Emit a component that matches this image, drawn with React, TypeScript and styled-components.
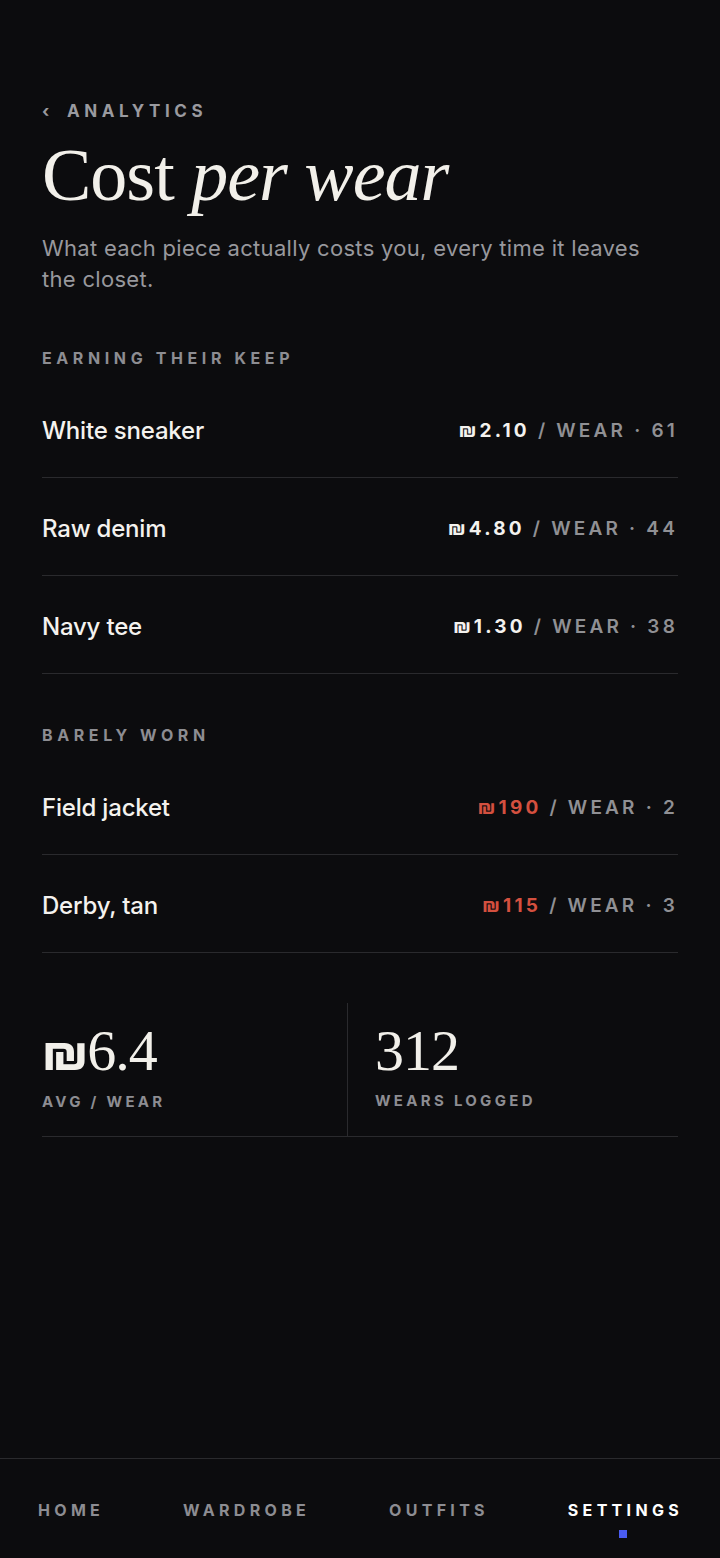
import React from "react";
import styled, { createGlobalStyle } from "styled-components";

const Global = createGlobalStyle`
  html, body { margin: 0; padding: 0; background: #0c0c0e; }
  body { font-family: Inter, "Noto Sans", sans-serif; -webkit-font-smoothing: antialiased; }
  * { box-sizing: border-box; }
`;

const Page = styled.div`
  min-height: 1558px;
  display: flex;
  flex-direction: column;
  background: #0c0c0e;
  color: #f2f0ea;
`;

const Main = styled.main`
  flex: 1;
  padding: 100px 42px 0;
  display: flex;
  flex-direction: column;
`;

const Back = styled.a`
  display: flex;
  align-items: center;
  gap: 13px;
  font-size: 17px;
  font-weight: 700;
  letter-spacing: 4.6px;
  color: #9a9a9f;
  line-height: 22px;
  text-decoration: none;
`;

const Title = styled.h1`
  margin: 11px 0 0;
  font-family: "Liberation Serif", "DejaVu Serif", serif;
  font-weight: 400;
  font-size: 74px;
  line-height: 84px;
  letter-spacing: -1px;
  color: #f2f0ea;
  em { font-style: italic; }
`;

const Lede = styled.p`
  margin: 16px 0 0;
  font-size: 22px;
  line-height: 31px;
  color: #98989d;
  letter-spacing: 0.3px;
`;

const SectionLabel = styled.h2<{ $top: number }>`
  margin: ${(p) => p.$top}px 0 0;
  font-size: 16px;
  font-weight: 700;
  letter-spacing: 4.6px;
  color: #8d8d92;
  line-height: 20px;
`;

const List = styled.ul`
  list-style: none;
  margin: 12px 0 0;
  padding: 0;
`;

const Row = styled.li`
  display: flex;
  justify-content: space-between;
  align-items: center;
  height: 98px;
  padding-top: 3px;
  border-bottom: 1px solid #2a2a2d;
`;

const Name = styled.span`
  font-size: 24px;
  font-weight: 500;
  letter-spacing: -0.2px;
  color: #f4f2ee;
`;

const Meta = styled.span`
  font-size: 19px;
  font-weight: 600;
  letter-spacing: 3.2px;
  color: #909094;
`;

const Price = styled.span<{ $warn?: boolean }>`
  font-weight: 700;
  color: ${(p) => (p.$warn ? "#d4503f" : "#f4f2ee")};
`;

const Stats = styled.section`
  margin-top: 50px;
  display: grid;
  grid-template-columns: 305px 1fr;
  border-bottom: 1px solid #2a2a2d;
`;

const Stat = styled.div<{ $right?: boolean }>`
  padding: 15px 0 25px ${(p) => (p.$right ? "27px" : "0")};
  border-left: ${(p) => (p.$right ? "1px solid #2a2a2d" : "none")};
  display: flex;
  flex-direction: column;
`;

const Big = styled.div`
  font-family: "Liberation Serif", "DejaVu Serif", serif;
  font-size: 58px;
  line-height: 66px;
  color: #f2f0ea;
  letter-spacing: -1px;
`;

const Shekel = styled.span`
  font-family: Inter, "DejaVu Sans", sans-serif;
  font-weight: 700;
  font-size: 50px;
`;

const StatLabel = styled.div`
  margin-top: 8px;
  font-size: 15px;
  line-height: 18px;
  font-weight: 700;
  letter-spacing: 3.3px;
  color: #8d8d92;
`;

const Nav = styled.nav`
  height: 100px;
  border-top: 1px solid #2a2a2d;
  display: flex;
  justify-content: space-between;
  align-items: flex-start;
  padding: 40px 37px 0 38px;
`;

const NavItem = styled.a<{ $active?: boolean }>`
  position: relative;
  font-size: 16px;
  font-weight: 700;
  letter-spacing: 4.3px;
  color: ${(p) => (p.$active ? "#ffffff" : "#8d8d92")};
  text-decoration: none;
  line-height: 22px;
`;

const Dot = styled.span`
  position: absolute;
  left: 50%;
  top: 31px;
  width: 8px;
  height: 8px;
  margin-left: -6px;
  background: #4a5cf0;
`;

type Item = { name: string; price: string; wears: number; warn?: boolean };

const keep: Item[] = [
  { name: "White sneaker", price: "₪2.10", wears: 61 },
  { name: "Raw denim", price: "₪4.80", wears: 44 },
  { name: "Navy tee", price: "₪1.30", wears: 38 },
];

const barely: Item[] = [
  { name: "Field jacket", price: "₪190", wears: 2, warn: true },
  { name: "Derby, tan", price: "₪115", wears: 3, warn: true },
];

const Rows = ({ items }: { items: Item[] }) => (
  <List>
    {items.map((it) => (
      <Row key={it.name}>
        <Name>{it.name}</Name>
        <Meta>
          <Price $warn={it.warn}>{it.price}</Price> / WEAR · {it.wears}
        </Meta>
      </Row>
    ))}
  </List>
);

export default function App() {
  return (
    <>
      <Global />
      <Page>
        <Main>
          <Back href="#">
            <span>‹</span>
            <span>ANALYTICS</span>
          </Back>
          <Title>
            Cost <em>per wear</em>
          </Title>
          <Lede>What each piece actually costs you, every time it leaves the closet.</Lede>
          <SectionLabel $top={53}>EARNING THEIR KEEP</SectionLabel>
          <Rows items={keep} />
          <SectionLabel $top={51}>BARELY WORN</SectionLabel>
          <Rows items={barely} />
          <Stats>
            <Stat>
              <Big>
                <Shekel>₪</Shekel>6.4
              </Big>
              <StatLabel>AVG / WEAR</StatLabel>
            </Stat>
            <Stat $right>
              <Big>312</Big>
              <StatLabel>WEARS LOGGED</StatLabel>
            </Stat>
          </Stats>
        </Main>
        <Nav>
          <NavItem href="#">HOME</NavItem>
          <NavItem href="#">WARDROBE</NavItem>
          <NavItem href="#">OUTFITS</NavItem>
          <NavItem href="#" $active>
            SETTINGS
            <Dot />
          </NavItem>
        </Nav>
      </Page>
    </>
  );
}
